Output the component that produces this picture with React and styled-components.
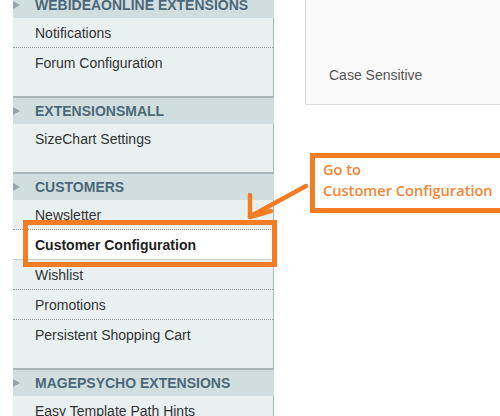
import React from "react";
import styled, { createGlobalStyle } from "styled-components";

const GlobalStyle = createGlobalStyle`
  html, body {
    margin: 0;
    padding: 0;
    background: #fff;
    font-family: "Liberation Sans", Arial, sans-serif;
  }
  body {
    width: 500px;
    height: 416px;
    overflow: hidden;
  }
`;

const Page = styled.div`
  position: relative;
  display: flex;
  align-items: flex-start;
  width: 500px;
  height: 416px;
  overflow: hidden;
`;

const Sidebar = styled.div`
  width: 261px;
  margin-left: 13px;
  margin-top: -8px;
  flex-shrink: 0;
`;

const Group = styled.div`
  display: flex;
  flex-direction: column;
`;

const Header = styled.div`
  position: relative;
  height: 26px;
  display: flex;
  align-items: center;
  padding-left: 22px;
  background: #d1dee0;
  color: #4c6878;
  font-size: 14px;
  font-weight: bold;
  text-transform: uppercase;
`;

const Arrow = styled.span`
  position: absolute;
  left: 0;
  top: 9px;
  width: 0;
  height: 0;
  border-top: 4px solid transparent;
  border-bottom: 4px solid transparent;
  border-left: 7px solid #8fa6ae;
`;

const Items = styled.div`
  display: flex;
  flex-direction: column;
  background: #e8f0f0;
  border-right: 1px solid #a9b7ba;
  border-bottom: 2px solid #a9b7ba;
  padding-bottom: 18px;
`;

const Item = styled.div`
  position: relative;
  height: 30px;
  box-sizing: border-box;
  display: flex;
  align-items: center;
  padding-left: 22px;
  font-size: 14px;
  color: ${(p) => (p.$active ? "#1f1f1f" : "#333")};
  font-weight: ${(p) => (p.$active ? "bold" : "normal")};
  background: ${(p) => (p.$active ? "#fff" : "transparent")};
  border-bottom: ${(p) =>
    p.$active ? "1px solid #c8cfd0" : p.$last ? "none" : "1px dotted #9a9a9a"};
`;

const Highlight = styled.div`
  position: absolute;
  left: 10px;
  right: -4px;
  top: -10px;
  bottom: -8px;
  border: 5px solid #f47c22;
  pointer-events: none;
`;

const Panel = styled.div`
  margin-left: 31px;
  width: 210px;
  height: 105px;
  box-sizing: border-box;
  background: #f9f9f9;
  border-left: 1px solid #dcdcdc;
  border-bottom: 1px solid #dcdcdc;
  display: flex;
  align-items: flex-end;
  padding: 0 0 21px 23px;
  color: #555;
  font-size: 14px;
`;

const Callout = styled.div`
  position: absolute;
  left: 310px;
  top: 153px;
  width: 210px;
  height: 60px;
  box-sizing: border-box;
  border: 5px solid #f47c22;
  padding: 1px 0 0 8px;
  color: #f58534;
  font-family: "Open Sans", "Liberation Sans", sans-serif;
  font-weight: 600;
  font-size: 14.6px;
  line-height: 21px;
  white-space: nowrap;
`;

const Pointer = styled.svg`
  position: absolute;
  left: 240px;
  top: 180px;
  overflow: visible;
`;

const groups = [
  {
    title: "Webideaonline Extensions",
    items: ["Notifications", "Forum Configuration"],
  },
  { title: "ExtensionsMall", items: ["SizeChart Settings"] },
  {
    title: "Customers",
    items: [
      "Newsletter",
      "Customer Configuration",
      "Wishlist",
      "Promotions",
      "Persistent Shopping Cart",
    ],
  },
  { title: "MagePsycho Extensions", items: ["Easy Template Path Hints"] },
];

const ACTIVE = "Customer Configuration";

export default function App() {
  return (
    <>
      <GlobalStyle />
      <Page>
        <Sidebar>
          {groups.map((g) => (
            <Group key={g.title}>
              <Header>
                <Arrow />
                {g.title}
              </Header>
              <Items>
                {g.items.map((it, i) => (
                  <Item
                    key={it}
                    $active={it === ACTIVE}
                    $last={i === g.items.length - 1}
                  >
                    {it}
                    {it === ACTIVE && <Highlight />}
                  </Item>
                ))}
              </Items>
            </Group>
          ))}
        </Sidebar>
        <Panel>Case Sensitive</Panel>
        <Callout>
          Go to
          <br />
          Customer Configuration
        </Callout>
        <Pointer width="70" height="40" viewBox="0 0 70 40">
          <g
            stroke="#f47c22"
            strokeWidth="4.5"
            strokeLinecap="round"
            fill="none"
          >
            <line x1="66" y1="6" x2="11" y2="36" />
            <line x1="10" y1="15" x2="10" y2="37" />
            <line x1="10" y1="37" x2="31" y2="31" />
          </g>
        </Pointer>
      </Page>
    </>
  );
}
